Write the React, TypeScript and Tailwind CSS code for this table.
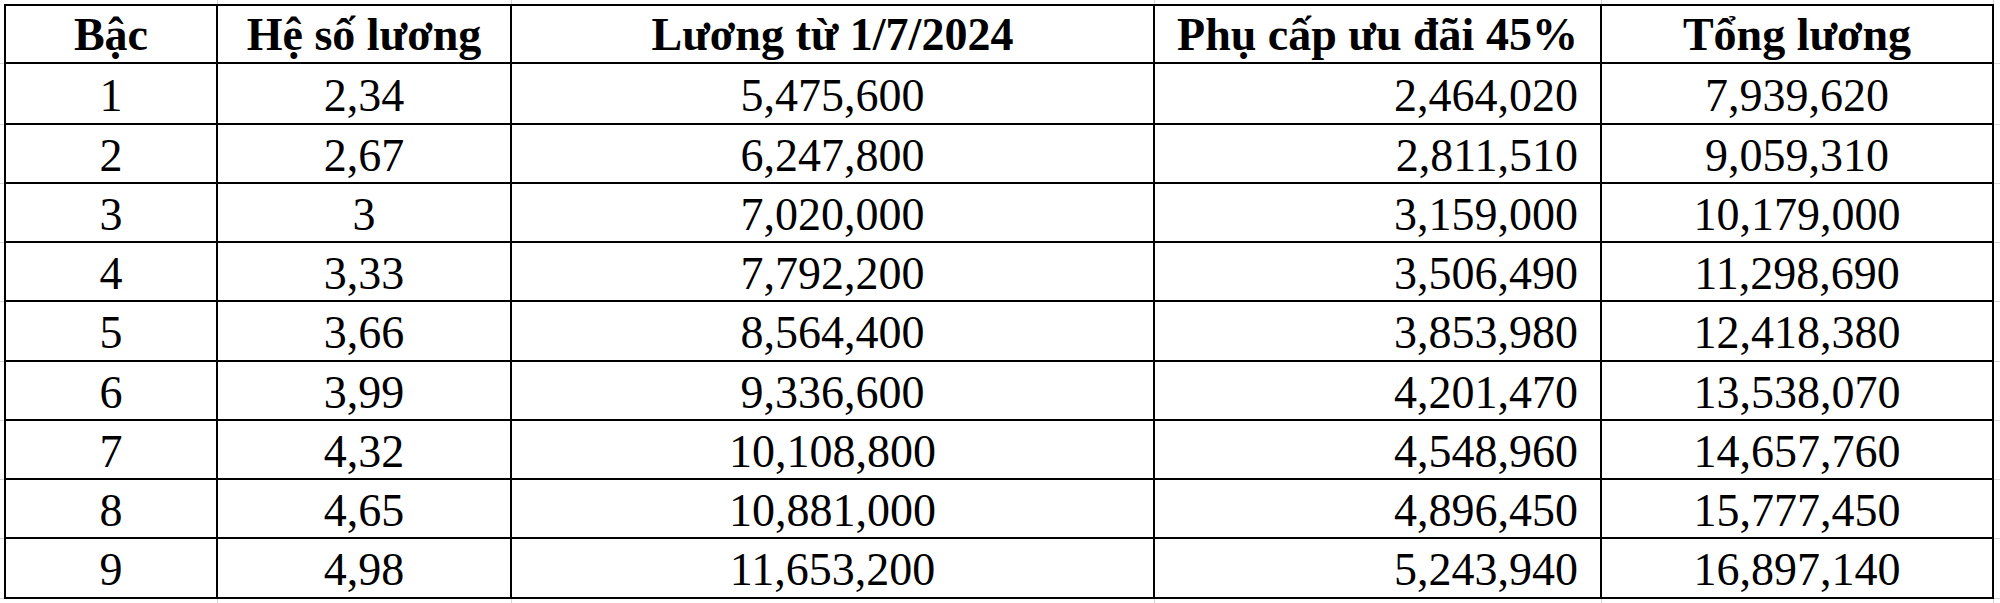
import React from "react";

const widths = ["w-[218px]", "w-[294px]", "w-[643px]", "w-[447px]", "w-[392px]"];
const rowH = ["h-[61px]", "h-[59px]", "h-[59px]", "h-[59px]", "h-[60px]", "h-[59px]", "h-[59px]", "h-[59px]", "h-[60px]"];

const headers = ["Bậc", "Hệ số lương", "Lương từ 1/7/2024", "Phụ cấp ưu đãi 45%", "Tổng lương"];
const rows: string[][] = [
  ["1", "2,34", "5,475,600", "2,464,020", "7,939,620"],
  ["2", "2,67", "6,247,800", "2,811,510", "9,059,310"],
  ["3", "3", "7,020,000", "3,159,000", "10,179,000"],
  ["4", "3,33", "7,792,200", "3,506,490", "11,298,690"],
  ["5", "3,66", "8,564,400", "3,853,980", "12,418,380"],
  ["6", "3,99", "9,336,600", "4,201,470", "13,538,070"],
  ["7", "4,32", "10,108,800", "4,548,960", "14,657,760"],
  ["8", "4,65", "10,881,000", "4,896,450", "15,777,450"],
  ["9", "4,98", "11,653,200", "5,243,940", "16,897,140"],
];

function GrayStubsH() {
  return (
    <div className="flex flex-1">
      {widths.map((w, i) => (
        <div key={i} className={`${w} shrink-0 border-r border-[#d6d6d6]`} />
      ))}
    </div>
  );
}

function GrayStubsV({ className }: { className: string }) {
  return (
    <div className={`flex flex-col ${className}`}>
      <div className="h-[60px] shrink-0 border-b border-[#d6d6d6]" />
      {rowH.map((h, i) => (
        <div key={i} className={`${h} shrink-0 border-b border-[#d6d6d6]`} />
      ))}
    </div>
  );
}

export default function App() {
  const cellW = ["w-[212px]", "w-[294px]", "w-[643px]", "w-[447px]", "w-[392px]"];
  return (
    <div
      className="w-[2000px] h-[603px] bg-white text-black flex flex-col overflow-hidden"
      style={{ fontFamily: '"Liberation Serif", "Times New Roman", serif' }}
    >
      <div className="h-[4px] flex shrink-0">
        <GrayStubsH />
      </div>
      <div className="flex shrink-0">
        <GrayStubsV className="w-[4px] shrink-0" />
        <div className="border-l-2 border-t-2 border-black flex flex-col shrink-0">
          <div className="flex h-[58px]">
            {headers.map((h, i) => (
              <div
                key={i}
                className={`${cellW[i]} shrink-0 border-r-2 border-b-2 border-black flex items-center justify-center font-bold text-[46px] leading-none pt-[2px]`}
              >
                {h}
              </div>
            ))}
          </div>
          {rows.map((r, ri) => (
            <div key={ri} className={`flex ${rowH[ri]}`}>
              {r.map((c, ci) => (
                <div
                  key={ci}
                  className={`${cellW[ci]} shrink-0 border-r-2 border-b-2 border-black flex items-center text-[46px] leading-none pt-[4px] ${
                    ci === 3 ? "justify-end pr-[22px]" : "justify-center"
                  }`}
                >
                  {c}
                </div>
              ))}
            </div>
          ))}
        </div>
        <GrayStubsV className="flex-1" />
      </div>
      <div className="flex-1 flex">
        <GrayStubsH />
      </div>
    </div>
  );
}
